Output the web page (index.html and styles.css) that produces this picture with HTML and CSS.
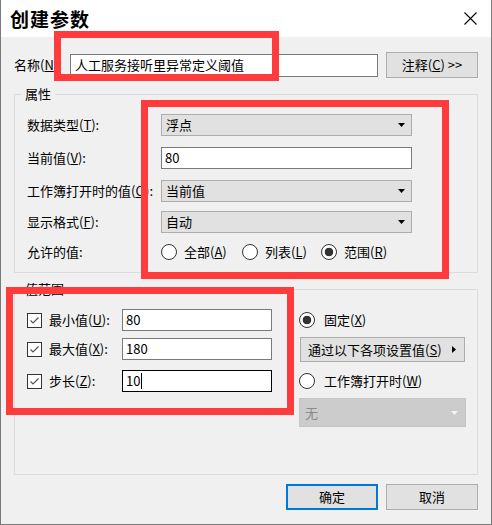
FILE: index.html
```html
<!DOCTYPE html>
<html lang="zh-CN">
<head>
<meta charset="utf-8">
<title>创建参数</title>
<link rel="stylesheet" href="styles.css">
</head>
<body>
<div class="window">
  <div class="titlebar">
    <span class="title">创建参数</span>
    <svg class="close" width="13" height="13" viewBox="0 0 13 13"><path d="M0.5 0.5 L12.5 12.5 M12.5 0.5 L0.5 12.5" stroke="#000" stroke-width="1.1" fill="none"/></svg>
  </div>
  <div class="content">
    <div class="name-row">
      <span class="name-label">名称(<u>N</u>):</span>
      <div class="edit name-edit">人工服务接听里异常定义阈值</div>
      <div class="btn note-btn"><span>注释(<u>C</u>) &gt;&gt;</span></div>
    </div>

    <fieldset class="group props">
      <legend>属性</legend>
      <div class="prop-row">
        <span class="plabel">数据类型(<u>T</u>):</span>
        <div class="combo"><span>浮点</span><svg width="7" height="4" viewBox="0 0 7 4"><polygon points="0,0 7,0 3.5,4" fill="#000"/></svg></div>
      </div>
      <div class="prop-row gap11">
        <span class="plabel">当前值(<u>V</u>):</span>
        <div class="edit prop-edit">80</div>
      </div>
      <div class="prop-row gap11">
        <span class="plabel">工作簿打开时的值(<u>O</u>):</span>
        <div class="combo"><span>当前值</span><svg width="7" height="4" viewBox="0 0 7 4"><polygon points="0,0 7,0 3.5,4" fill="#000"/></svg></div>
      </div>
      <div class="prop-row gap9">
        <span class="plabel">显示格式(<u>F</u>):</span>
        <div class="combo"><span>自动</span><svg width="7" height="4" viewBox="0 0 7 4"><polygon points="0,0 7,0 3.5,4" fill="#000"/></svg></div>
      </div>
      <div class="prop-row gap8">
        <span class="plabel">允许的值:</span>
        <div class="radios">
          <label class="opt opt-all"><span class="radio"></span><span>全部(<u>A</u>)</span></label>
          <label class="opt opt-list"><span class="radio"></span><span>列表(<u>L</u>)</span></label>
          <label class="opt"><span class="radio checked"></span><span>范围(<u>R</u>)</span></label>
        </div>
      </div>
    </fieldset>

    <fieldset class="group range">
      <legend>值范围</legend>
      <div class="range-body">
        <div class="range-left">
          <div class="chk-row">
            <span class="chk"><svg width="13" height="13" viewBox="0 0 13 13"><polyline points="2.5,6.5 5,9 10.5,3.5" fill="none" stroke="#555" stroke-width="1.2"/></svg></span>
            <span class="chk-label">最小值(<u>U</u>):</span>
            <div class="edit range-edit">80</div>
          </div>
          <div class="chk-row gap7">
            <span class="chk"><svg width="13" height="13" viewBox="0 0 13 13"><polyline points="2.5,6.5 5,9 10.5,3.5" fill="none" stroke="#555" stroke-width="1.2"/></svg></span>
            <span class="chk-label">最大值(<u>X</u>):</span>
            <div class="edit range-edit">180</div>
          </div>
          <div class="chk-row gap10">
            <span class="chk"><svg width="13" height="13" viewBox="0 0 13 13"><polyline points="2.5,6.5 5,9 10.5,3.5" fill="none" stroke="#555" stroke-width="1.2"/></svg></span>
            <span class="chk-label">步长(<u>Z</u>):</span>
            <div class="edit range-edit focused"><span>10</span><span class="caret"></span></div>
          </div>
        </div>
        <div class="range-right">
          <label class="opt rrow"><span class="radio checked"></span><span>固定(<u>X</u>)</span></label>
          <div class="btn set-btn"><span>通过以下各项设置值(<u>S</u>)</span><svg width="4" height="7" viewBox="0 0 4 7"><polygon points="0,0 4,3.5 0,7" fill="#000"/></svg></div>
          <label class="opt rrow gap8"><span class="radio"></span><span>工作簿打开时(<u>W</u>)</span></label>
          <div class="combo disabled"><span>无</span><svg width="7" height="4" viewBox="0 0 7 4"><polygon points="0,0 7,0 3.5,4" fill="#f4f4f4"/></svg></div>
        </div>
      </div>
    </fieldset>

    <div class="footer">
      <div class="btn fbtn ok">确定</div>
      <div class="btn fbtn">取消</div>
    </div>
  </div>

  <div class="mark mark-name"></div>
  <div class="mark mark-props"></div>
  <div class="mark mark-range"></div>
</div>
</body>
</html>
```

FILE: styles.css
```css
* { box-sizing: border-box; }

body {
  margin: 0;
  font-family: "Noto Sans CJK SC", "Microsoft YaHei", sans-serif;
  font-size: 13px;
  line-height: 16px;
  color: #000;
  background: #fff;
}

u { text-decoration: underline; text-underline-offset: 1px; }

.window {
  position: relative;
  width: 492px;
  height: 525px;
  background: #f0f0f0;
  border: 1px solid #7a7a7a;
  border-top: none;
  display: flex;
  flex-direction: column;
}

.titlebar {
  flex: none;
  height: 37px;
  background: #fff;
  display: flex;
  align-items: center;
  justify-content: space-between;
  padding: 0 14px 0 9px;
}

.title {
  font-size: 19px;
  font-weight: 700;
  letter-spacing: 1px;
  line-height: 22px;
}

.content {
  flex: 1;
  display: flex;
  flex-direction: column;
  padding: 15px 13px 14px 13px;
}

.name-row {
  display: flex;
  align-items: center;
  height: 26px;
}

.name-label { width: 56px; flex: none; white-space: nowrap; }

.edit {
  background: #fff;
  border: 1px solid #7a7a7a;
  height: 22px;
  padding: 0 3px;
  display: flex;
  align-items: center;
  white-space: nowrap;
}

.name-edit { width: 308px; height: 23px; padding-left: 4px; }

.btn {
  background: #e1e1e1;
  border: 1px solid #adadad;
  display: flex;
  align-items: center;
  justify-content: center;
  white-space: nowrap;
}

.note-btn { margin-left: 8px; width: 92px; height: 26px; }

.group {
  margin: 8px 0 0;
  border: 1px solid #dcdcdc;
  min-width: 0;
}

.group legend {
  padding: 0 4px;
  margin-left: -6px;
  line-height: 16px;
}

.props { padding: 12px 12px 9px 12px; flex: none; }

.prop-row {
  display: flex;
  align-items: center;
  height: 22px;
}

.gap7 { margin-top: 7px; }
.gap8 { margin-top: 8px; }
.gap9 { margin-top: 9px; }
.gap10 { margin-top: 10px; }
.gap11 { margin-top: 11px; }

.plabel { width: 134px; flex: none; white-space: nowrap; }

.combo {
  width: 251px;
  height: 22px;
  background: #e1e1e1;
  border: 1px solid #adadad;
  display: flex;
  align-items: center;
  justify-content: space-between;
  padding: 0 6px 0 4px;
}

.prop-edit { width: 251px; }

.radios { display: flex; align-items: center; }

.opt {
  display: flex;
  align-items: center;
  gap: 7px;
  white-space: nowrap;
}

.opt-all { width: 81px; }
.opt-list { width: 79px; }

.radio {
  flex: none;
  width: 16px;
  height: 16px;
  border-radius: 50%;
  border: 1px solid #333;
  background: #fff;
}

.radio.checked {
  background: radial-gradient(circle at center, #333 0 4px, #fff 4.6px);
}

.range {
  flex: 1;
  padding: 12px 11px 0 12px;
}

.range-body { display: flex; }

.range-left {
  width: 245px;
  flex: none;
  display: flex;
  flex-direction: column;
}

.chk-row {
  display: flex;
  align-items: center;
  height: 22px;
}

.chk {
  flex: none;
  width: 15px;
  height: 15px;
  border: 1px solid #333;
  background: #fff;
  display: flex;
}

.chk-label { width: 73px; margin-left: 7px; flex: none; white-space: nowrap; }

.range-edit { width: 150px; }

.range-edit.focused { border-color: #000; }

.caret {
  display: inline-block;
  width: 1px;
  height: 16px;
  background: #000;
  margin-left: 1px;
}

.range-right {
  margin-left: 27px;
  width: 167px;
  display: flex;
  flex-direction: column;
}

.rrow { height: 22px; gap: 9px; }

.set-btn {
  margin: 6px 1px 0 1px;
  height: 25px;
  justify-content: space-between;
  padding: 0 8px 0 7px;
}

.combo.disabled {
  margin-top: 6px;
  width: 167px;
  height: 29px;
  background: #cccccc;
  border-color: #c4c4c4;
  color: #8a8a8a;
  padding: 0 7px 0 5px;
}

.footer {
  display: flex;
  justify-content: flex-end;
  gap: 8px;
  margin-top: 9px;
}

.fbtn { width: 92px; height: 26px; }

.ok { border: 2px solid #0078d7; }

.mark {
  position: absolute;
  border: 7px solid #ff3b3b;
}

.mark-name { left: 53px; top: 31px; width: 225px; height: 50px; }
.mark-props { left: 140px; top: 100px; width: 308px; height: 179px; }
.mark-range { left: 5px; top: 287px; width: 288px; height: 128px; }
```
